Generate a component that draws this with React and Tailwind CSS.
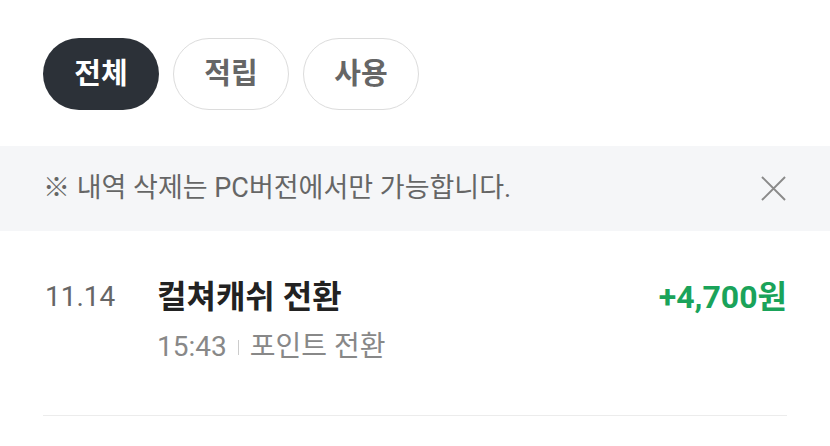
import React, { useState } from "react";

const font = { fontFamily: '"Roboto", "Noto Sans CJK KR", sans-serif' };

const tabs = ["전체", "적립", "사용"];

const App = () => {
  const [active, setActive] = useState(0);
  const [showNotice, setShowNotice] = useState(true);

  return (
    <div className="w-[830px] h-[446px] bg-white overflow-hidden" style={font}>
      {/* tabs */}
      <div className="flex gap-[14px] px-[43px] pt-[38px] pb-[36px]">
        {tabs.map((t, i) => (
          <button
            key={t}
            onClick={() => setActive(i)}
            className={`h-[72px] w-[116px] rounded-full text-[29px] leading-none flex items-center justify-center font-bold ${
              i === active
                ? "bg-[#2c3138] text-white"
                : "bg-white border border-[#dcdcdc] text-[#666]"
            }`}
          >
            {t}
          </button>
        ))}
      </div>

      {/* notice */}
      {showNotice && (
        <div className="h-[85px] bg-[#f5f6f8] flex items-center justify-between pl-[43px] pr-[44px]">
          <span className="text-[27px] text-[#666] leading-none">
            ※ 내역 삭제는 PC버전에서만 가능합니다.
          </span>
          <button onClick={() => setShowNotice(false)} aria-label="닫기">
            <svg width="25" height="25" viewBox="0 0 26 26" fill="none" stroke="#8a8a8a" strokeWidth="2">
              <path d="M1 1L25 25M25 1L1 25" />
            </svg>
          </button>
        </div>
      )}

      {/* history */}
      <div className="mx-[43px] border-b border-[#ececec] pt-[50px] pb-[54px] flex">
        <div className="w-[114px] text-[28px] text-[#666] leading-none pl-[2px] pt-[2px]">11.14</div>
        <div className="flex-1">
          <div className="text-[32px] font-bold text-[#222] leading-none">컬쳐캐쉬 전환</div>
          <div className="mt-[20px] flex items-center text-[28px] text-[#888] leading-none">
            <span>15:43</span>
            <span className="mx-[11px] w-px h-[15px] bg-[#ccc]" />
            <span>포인트 전환</span>
          </div>
        </div>
        <div className="text-[32px] font-bold text-[#1aa35a] leading-none">+4,700원</div>
      </div>
    </div>
  );
};

export default App;
